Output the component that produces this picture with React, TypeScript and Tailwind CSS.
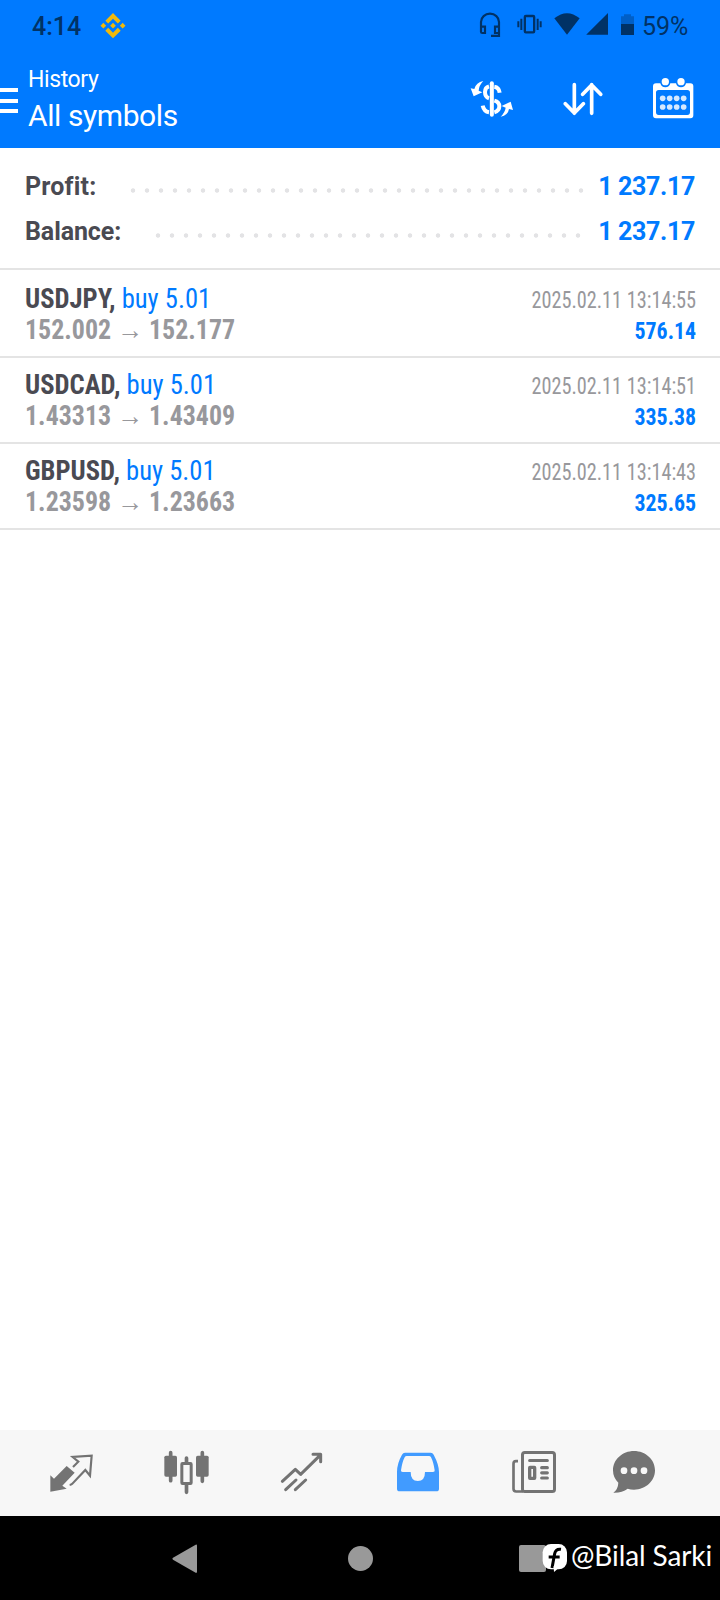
import type { ReactNode } from "react";

interface Deal {
  symbol: string;
  side: string;
  open: string;
  close: string;
  time: string;
  profit: string;
}

const deals: Deal[] = [
  { symbol: "USDJPY", side: "buy 5.01", open: "152.002", close: "152.177", time: "2025.02.11 13:14:55", profit: "576.14" },
  { symbol: "USDCAD", side: "buy 5.01", open: "1.43313", close: "1.43409", time: "2025.02.11 13:14:51", profit: "335.38" },
  { symbol: "GBPUSD", side: "buy 5.01", open: "1.23598", close: "1.23663", time: "2025.02.11 13:14:43", profit: "325.65" },
];

interface GlyphProps {
  viewBox: string;
  className: string;
  children: ReactNode;
}

function Glyph({ viewBox, className, children }: GlyphProps) {
  return (
    <svg viewBox={viewBox} className={`block shrink-0 ${className}`} fill="none" stroke="none">
      {children}
    </svg>
  );
}

function StatusBar() {
  return (
    <div className="flex h-[52px] items-center text-[#003266]">
      <span className="ml-8 w-[50px] whitespace-nowrap pt-0.5 text-[25px] font-medium leading-[52px]">4:14</span>
      <Glyph viewBox="300 0 78 156" className="ml-[18px] h-[52px] w-[26px]">
        <g fill="#f0b90b">
          <path d="M339 39l23 23-8.500 8.500L339 56l-14.500 14.500L316 62z" />
          <path d="M339 115l23-23-8.500-8.500L339 98l-14.500-14.500L316 92z" />
          <path d="M339 68.500l8.500 8.500-8.500 8.500-8.500-8.500zM310 68.500l8.500 8.500-8.500 8.500-8.500-8.500zM368 68.500l8.500 8.500-8.500 8.500-8.500-8.500z" />
        </g>
      </Glyph>

      {/* Headset */}
      <Glyph viewBox="87 0 69 156" className="ml-[353px] h-[52px] w-[23px]">
        <path d="M93 96V66a27 25 0 0 1 54 0v41.500H123M93 80h12v19h-8a4 4 0 0 1-4-4zM147 80h-12v19h12" stroke="currentColor" strokeWidth="6.500" />
      </Glyph>
      {/* Vibrate */}
      <Glyph viewBox="198 0 81 156" className="ml-[14px] h-[52px] w-[27px]">
        <rect x="224.500" y="48" width="28" height="49" rx="3" stroke="currentColor" strokeWidth="7" />
        <path d="M214 56v34M205 64v18M263 56v34M272 64v18" stroke="currentColor" strokeWidth="6" />
      </Glyph>
      {/* Wifi */}
      <Glyph viewBox="312 0 78 156" className="ml-[11px] h-[52px] w-[26px]">
        <path d="M351 104L313 55Q351 24 389 55z" fill="currentColor" />
      </Glyph>
      <Glyph viewBox="408 0 66 156" className="ml-1.5 h-[52px] w-[22px]">
        <path d="M474 39v65.500H408.500z" fill="currentColor" />
      </Glyph>
      {/* Battery */}
      <Glyph viewBox="510 0 45 156" className="ml-3 h-[52px] w-[15px]">
        <path d="M513 72V49h9v-6h21v6h9v23z" fill="#005fc7" />
        <path d="M513 72h39v33h-39z" fill="currentColor" />
      </Glyph>
      <span className="ml-[7px] whitespace-nowrap pt-0.5 text-[25px] leading-[52px]">59%</span>
    </div>
  );
}

function Header() {
  return (
    <div className="flex h-24 text-white">
      <div className="mt-9 flex w-[18px] flex-col gap-[6.5px]">
        <div className="h-1 bg-white" />
        <div className="h-1 bg-white" />
        <div className="h-1 bg-white" />
      </div>
      <div className="ml-[10px] w-[442px] whitespace-nowrap pt-[13px]">
        <div className="text-[23px] leading-[30px] tracking-[-0.4px]">History</div>
        <div className="pt-px text-[30px] leading-[40px] tracking-[-0.42px]">All symbols</div>
      </div>

      {/* Currency exchange */}
      <Glyph viewBox="60 156 132 288" className="h-24 w-11">
        <path d="M125.500 250v94" stroke="#fff" strokeWidth="12" strokeLinecap="round" />
        <path d="M117 259q-12 3-12 17 0 15 12 19M98 317q4 18 19 20M133 260q14 2 16 18M133 302q15 4 15 17 0 14-15 18" stroke="#fff" strokeWidth="12" />
        <path d="M100 243q-22 4-27 24l-11-2 9 24 26-12-11-5q1-16 14-29zM152 350q22-4 25-23l12 3-7-25-27 13 12 5q-2 14-15 27z" fill="#fff" />
      </Glyph>
      {/* Sort */}
      <Glyph viewBox="339 156 120 288" className="ml-[49px] h-24 w-10">
        <path d="M373 254v86M346 311l27 28 27-28M425 340v-86M398 283l27-28 27 28" stroke="#fff" strokeWidth="11" strokeLinecap="round" strokeLinejoin="round" />
      </Glyph>
      {/* Calendar */}
      <Glyph viewBox="606 156 126 288" className="ml-[49px] h-24 w-[42px]">
        <path fillRule="evenodd" fill="#fff" d="M618 250h13q3 12 15 12t15-12h17q3 12 15 12t15-12h13q9 0 9 9v87q0 9-9 9H618q-9 0-9-9v-87q0-9 9-9zM626 270q-8 0-8 8v58q0 9 8 9h86q8 0 8-9v-58q0-8-8-8z" />
        <circle cx="646" cy="245" r="11" fill="#fff" />
        <circle cx="693" cy="245" r="11" fill="#fff" />
        <g fill="#d4e8ff">
          {[638, 659, 680, 701].map((x) => (
            <g key={x}>
              <circle cx={x} cy="295" r="8.500" />
              <circle cx={x} cy="321" r="8.500" />
            </g>
          ))}
        </g>
      </Glyph>
    </div>
  );
}

const dots = "h-[5px] bg-[radial-gradient(circle_at_center,#e3e3e5_1.8px,transparent_2.6px)] bg-[length:14px_5px]";

function Summary() {
  return (
    <div className="h-[122px] border-b-2 border-[#e4e4e4] pt-4 text-[25px] font-bold leading-[45px] text-[#4a4a52]">
      <div className="flex items-center pl-[25px] pr-[25px]">
        <span className="w-[101px] tracking-[0.2px]">Profit:</span>
        <div className={`mt-2 w-[462px] ${dots}`} />
        <span className="ml-auto tracking-[-0.35px] text-[#007aff]">1 237.17</span>
      </div>
      <div className="flex items-center pl-[25px] pr-[25px]">
        <span className="w-[126px] tracking-[-0.1px]">Balance:</span>
        <div className={`mt-2 w-[434px] ${dots}`} />
        <span className="ml-auto tracking-[-0.35px] text-[#007aff]">1 237.17</span>
      </div>
    </div>
  );
}

function DealRow({ deal }: { deal: Deal }) {
  return (
    <div className="flex h-[86px] justify-between whitespace-nowrap border-b-2 border-[#e4e4e4] pl-[25px] pr-6 pt-3 font-['Roboto_Condensed',Roboto,sans-serif] leading-[31px] [font-stretch:75%]">
      <div className="text-[27px]">
        <div className="origin-left scale-x-[0.984]">
          <span className="font-bold text-[#4a4a52]">{deal.symbol},</span> <span className="text-[#007aff]">{deal.side}</span>
        </div>
        <div className="origin-left scale-x-[0.96] font-bold text-[#98989c]">
          {deal.open} → {deal.close}
        </div>
      </div>
      <div className="pt-px text-right text-[23px]">
        <div className="origin-right scale-x-[0.88] text-[#98989c]">{deal.time}</div>
        <div className="origin-right scale-x-[0.95] font-bold text-[#007aff]">{deal.profit}</div>
      </div>
    </div>
  );
}

function TabBar() {
  return (
    <div className="flex h-[86px] bg-[#f7f7f7] text-[#737373]">
      {/* Quotes */}
      <Glyph viewBox="147 30 135 258" className="ml-[49px] h-[86px] w-[45px]">
        <path d="M151 166l11 10 38-38 24 20-37 39 13 9-49 9z" fill="currentColor" />
        <path d="M209 195q6-1 9-5l38-40 14 17 5-60-57 4 17 14-16 16" stroke="currentColor" strokeWidth="6.500" />
      </Glyph>
      {/* Charts */}
      <Glyph viewBox="489 30 144 258" className="ml-[69px] h-[86px] w-12">
        <path d="M512 98v84M607 98v86M559.500 114v14M559.500 194v23" stroke="currentColor" strokeWidth="11" strokeLinecap="round" />
        <rect x="493" y="107" width="38" height="63" rx="5" fill="currentColor" />
        <rect x="588" y="107" width="38" height="63" rx="5" fill="currentColor" />
        <rect x="545.500" y="130.500" width="28" height="60" rx="2" stroke="currentColor" strokeWidth="9" />
      </Glyph>
      {/* Trade */}
      <Glyph viewBox="120 30 132 258" className="ml-[69px] h-[86px] w-11">
        <path d="M127 184l39-36 16 15 58-57M219 103h23v22M137 209l31-29M166 209l31-29" stroke="currentColor" strokeWidth="9" strokeLinecap="round" strokeLinejoin="round" />
      </Glyph>
      {/* History */}
      <Glyph viewBox="468 30 132 258" className="ml-[72px] h-[86px] w-11">
        <path fillRule="evenodd" fill="#419bff" d="M495 98h77q6 0 9 6 16 30 16 52v50q0 8-8 8H479q-8 0-8-8v-50q0-26 15-52 3-6 9-6zM500 108q-4 0-6 4-7 13-11 39-1 5 5 5h24q0 27 21.500 27T555 156h24q6 0 5-5-4-26-11-39-2-4-6-4z" />
      </Glyph>
      {/* News */}
      <Glyph viewBox="93 30 138 258" className="ml-[71px] h-[86px] w-[46px]">
        <rect x="127.500" y="97.500" width="96" height="117" rx="7" stroke="currentColor" strokeWidth="9" />
        <path d="M114 123.500h-6q-7.500 0-7.500 8v75q0 8 8 8h20" stroke="currentColor" strokeWidth="8" />
        <path d="M149 121.500h53M185 143h17M185 158.500h17M185 174h17" stroke="currentColor" strokeWidth="9.500" strokeLinecap="round" />
        <rect x="149" y="142" width="15" height="33" rx="1" stroke="currentColor" strokeWidth="10" />
      </Glyph>
      {/* Messages */}
      <Glyph viewBox="396 30 132 258" className="ml-[55px] h-[86px] w-11">
        <path d="M462 93c35 0 63 26 63 58s-28 58-63 58q-10 0-19-3-17 13-43 12 14-10 15-30-16-15-16-37c0-32 28-58 63-58z" fill="currentColor" />
        <circle cx="432" cy="152" r="10" fill="#f7f7f7" />
        <circle cx="462" cy="152" r="10" fill="#f7f7f7" />
        <circle cx="492" cy="152" r="10" fill="#f7f7f7" />
      </Glyph>
    </div>
  );
}

function SystemNav() {
  return (
    <div className="relative flex h-[84px] bg-black">
      <Glyph viewBox="513 288 81 252" className="ml-[171px] h-[84px] w-[27px]">
        <path d="M587 374q4-2 4 3v78q0 5-4 3l-68-39q-4-3 0-6z" fill="#999" />
      </Glyph>
      <div className="ml-[150px] mt-[30px] size-[25px] rounded-full bg-[#999]" />
      <div className="ml-[146px] mt-[29px] size-[27px] rounded-[2px] bg-[#999]" />

      {/* Page watermark, lies over the recents button */}
      <div className="absolute left-[542px] top-0 flex h-[84px] text-white">
        <Glyph viewBox="186 288 78 252" className="h-[84px] w-[26px]">
          <rect x="188" y="372" width="73" height="76" rx="25" fill="#fff" />
          <path d="M243 388q-16-2-19 13l-8 43M206 411h33" stroke="#000" strokeWidth="9" />
          <path d="M221 438l1 18 14-12z" fill="#fff" />
        </Glyph>
        <span className="ml-[3px] whitespace-nowrap font-[Lato,sans-serif] text-[28px] leading-[78px] tracking-[-0.1px]">@Bilal Sarki</span>
      </div>
    </div>
  );
}

export default function App() {
  return (
    <div className="flex h-[1600px] w-[720px] flex-col overflow-hidden bg-white font-[Roboto,sans-serif]">
      <div className="h-[148px] bg-[#007aff]">
        <StatusBar />
        <Header />
      </div>
      <Summary />
      <div className="flex-1 pt-0.5">
        {deals.map((deal) => (
          <DealRow key={deal.symbol} deal={deal} />
        ))}
      </div>
      <TabBar />
      <SystemNav />
    </div>
  );
}
